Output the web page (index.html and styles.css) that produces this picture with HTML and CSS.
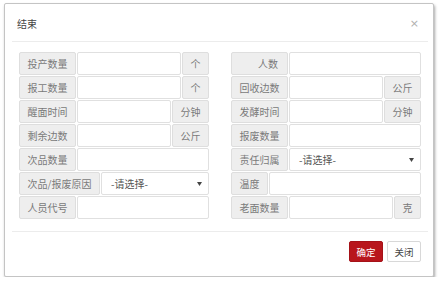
FILE: index.html
```html
<!DOCTYPE html>
<html lang="zh-CN">
<head>
<meta charset="utf-8">
<title>结束</title>
<link rel="stylesheet" href="styles.css">
</head>
<body>
<div class="dialog">
  <div class="header">
    <span class="title">结束</span>
    <span class="close">×</span>
  </div>
  <div class="body">
    <div class="col">
      <div class="group"><span class="addon">投产数量</span><span class="input"></span><span class="addon">个</span></div>
      <div class="group"><span class="addon">报工数量</span><span class="input"></span><span class="addon">个</span></div>
      <div class="group"><span class="addon">醒面时间</span><span class="input"></span><span class="addon">分钟</span></div>
      <div class="group"><span class="addon">剩余边数</span><span class="input"></span><span class="addon">公斤</span></div>
      <div class="group"><span class="addon">次品数量</span><span class="input"></span></div>
      <div class="group"><span class="addon">次品/报废原因</span><span class="select"><span>-请选择-</span><svg class="caret" width="5" height="4" viewBox="0 0 5 4"><path d="M0 0H5L2.5 4Z" fill="#444"/></svg></span></div>
      <div class="group"><span class="addon">人员代号</span><span class="input"></span></div>
    </div>
    <div class="col">
      <div class="group"><span class="addon fixed">人数</span><span class="input"></span></div>
      <div class="group"><span class="addon">回收边数</span><span class="input"></span><span class="addon">公斤</span></div>
      <div class="group"><span class="addon">发酵时间</span><span class="input"></span><span class="addon">分钟</span></div>
      <div class="group"><span class="addon">报废数量</span><span class="input"></span></div>
      <div class="group"><span class="addon">责任归属</span><span class="select"><span>-请选择-</span><svg class="caret" width="5" height="4" viewBox="0 0 5 4"><path d="M0 0H5L2.5 4Z" fill="#444"/></svg></span></div>
      <div class="group"><span class="addon">温度</span><span class="input"></span></div>
      <div class="group"><span class="addon">老面数量</span><span class="input"></span><span class="addon">克</span></div>
    </div>
  </div>
  <div class="footer">
    <button class="btn btn-primary">确定</button>
    <button class="btn btn-default">关闭</button>
  </div>
</div>
</body>
</html>
```

FILE: styles.css
```css
* { box-sizing: border-box; }
html, body { margin: 0; padding: 0; background: #fff; }
body {
  font-family: "Noto Sans CJK SC", "Liberation Sans", sans-serif;
  font-size: 10px;
  color: #555;
  padding: 3px 0 0 4px;
}
.dialog {
  width: 430px;
  height: 274px;
  border: 1px solid #c4c4c4;
  border-radius: 2px;
  background: #fff;
  box-shadow: 1px 2px 3px rgba(0, 0, 0, 0.35);
  display: flex;
  flex-direction: column;
}
.header {
  margin: 0 5px 0 7px;
  height: 38px;
  padding: 2px 9px 0 5px;
  border-bottom: 1px solid #ececec;
  display: flex;
  align-items: center;
  justify-content: space-between;
}
.title { color: #444; font-size: 10px; }
.close { color: #b0b0b0; font-size: 11px; line-height: 1; font-family: "DejaVu Sans", sans-serif; }
.body {
  margin: 0 5px 0 7px;
  padding: 10px 7px 12px 7px;
  border-bottom: 1px solid #ececec;
  display: grid;
  grid-template-columns: 190px 190px;
  column-gap: 22px;
}
.col { display: flex; flex-direction: column; gap: 1px; }
.group { display: flex; gap: 1px; height: 23px; }
.addon {
  flex: none;
  height: 23px;
  padding: 0 7.5px;
  border: 1px solid #dedede;
  border-radius: 2px;
  background: #eeeeee;
  color: #7a7a7a;
  line-height: 21px;
  white-space: nowrap;
}
.addon.fixed { width: 57px; text-align: right; padding-right: 9px; }
.input {
  flex: 1;
  height: 23px;
  border: 1px solid #e0e0e0;
  border-radius: 2px;
  background: #fff;
}
.select {
  flex: 1;
  height: 23px;
  border: 1px solid #e0e0e0;
  border-radius: 2px;
  background: #fff;
  display: flex;
  align-items: center;
  justify-content: space-between;
  padding: 0 6px 0 9px;
  color: #555;
}
.caret { display: block; }
.footer {
  flex: 1;
  margin: 0 5px 0 7px;
  padding: 9px 7px 0 0;
  display: flex;
  justify-content: flex-end;
  align-items: flex-start;
  gap: 4px;
}
.btn {
  font-family: inherit;
  font-size: 9.5px;
  height: 21px;
  width: 34px;
  padding: 0;
  border-radius: 2px;
  cursor: pointer;
}
.btn-primary { background: #b8161c; border: 1px solid #a51218; color: #fff; }
.btn-default { background: #fff; border: 1px solid #d8d8d8; color: #444; }
```
